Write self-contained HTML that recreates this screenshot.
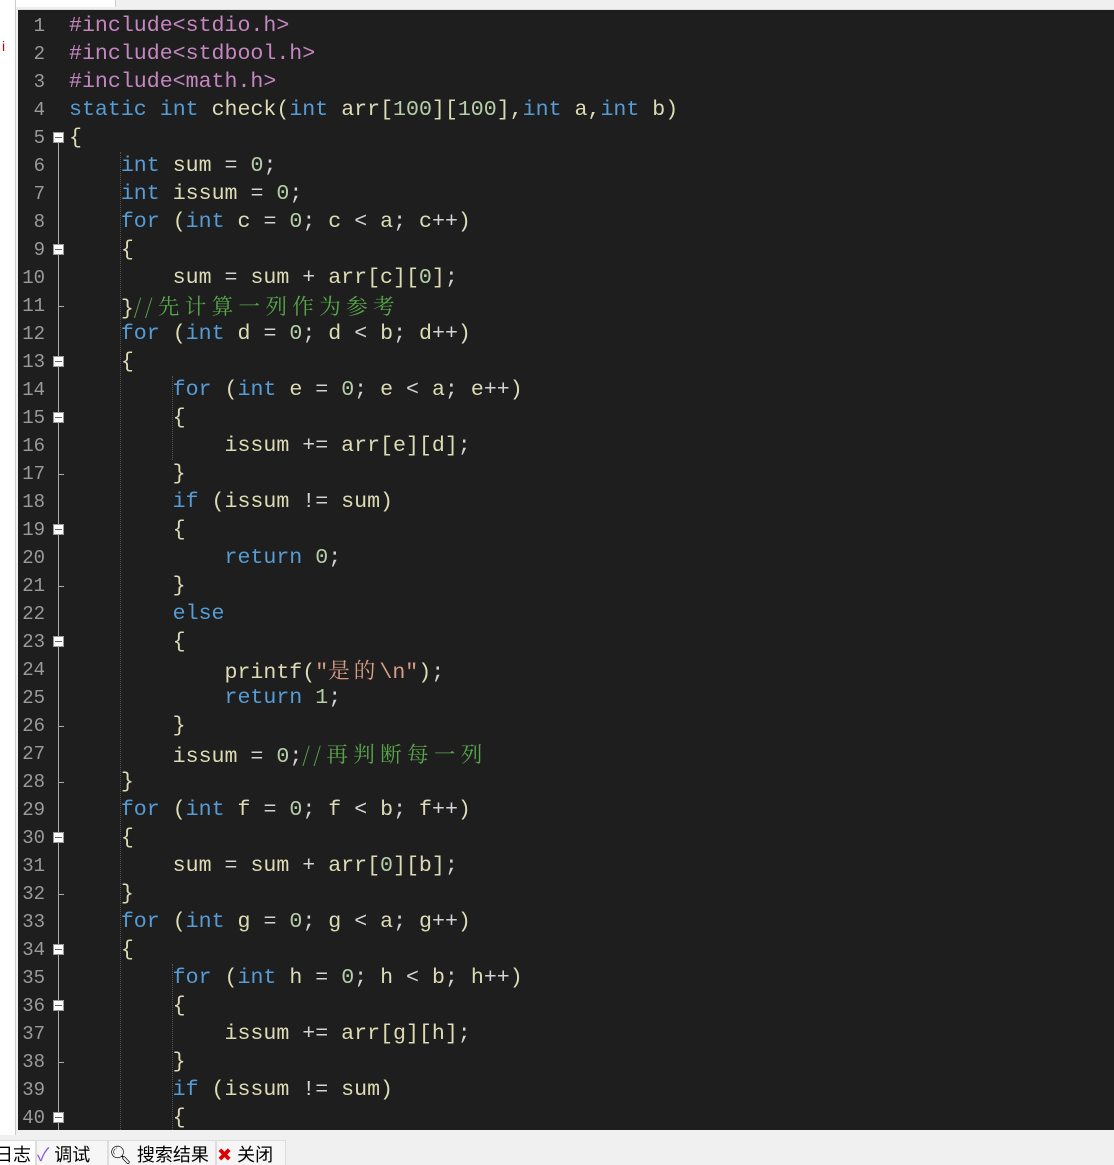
<!DOCTYPE html>
<html><head><meta charset="utf-8"><style>
body{margin:0;width:1114px;height:1161px;background:#f0f0f0;position:relative;overflow:hidden;font-family:"Liberation Mono",monospace}
#left{position:absolute;left:0;top:0;width:15px;height:1135px;background:#fff;border-right:1px solid #ccc}
#ed{position:absolute;left:18px;top:10px;width:1096px;height:1120px;background:#1e1e1e;overflow:hidden}
#lines{position:absolute;left:0;top:2px;width:100%;height:100%}
.ln{position:absolute;left:0;width:27px;text-align:right;color:#9a9a9a;font-size:19px;height:28px;line-height:28px}
.c{position:absolute;left:51px;white-space:pre;font-size:21.6px;height:28px;line-height:28px;color:#dcdcb4}
.k{color:#569cd6}.p{color:#c586c0}.n{color:#b5cea8}.o{color:#d4d4d4}.cm{color:#57a64a;font-family:"Noto Serif CJK SC",serif;letter-spacing:5.3px}.s{color:#d69d85}.cs{font-family:"Noto Serif CJK SC",serif;letter-spacing:4px}
.fl{position:absolute;left:40px;width:1px;background:#aaa}
.box{position:absolute;left:35px;width:9px;height:9px;background:#fff;border:1px solid #999}
.box:after{content:"";position:absolute;left:1px;top:4px;width:7px;height:1px;background:#666}
.tk{position:absolute;left:40px;width:6px;height:1px;background:#aaa}
.g{position:absolute;width:0;border-left:1px dotted #555}
#bt{position:absolute;left:0;top:1137px;width:1114px;height:24px;background:#f0f0f0;font-family:"Liberation Sans","Noto Sans CJK SC",sans-serif;font-size:18px}
.tab{position:absolute;top:3px;height:24px;background:#f6f6f6;border:1px solid #ddd;border-bottom:none;line-height:28px;white-space:nowrap;overflow:hidden}
</style></head><body>
<div style="position:absolute;left:15px;top:0;width:1099px;height:9px;background:#f0f0f0;border-bottom:1px solid #ddd"></div>
<div style="position:absolute;left:15px;top:0;width:100px;height:7px;background:#fff;border-right:1px solid #ccc"></div>
<div id="left"><span style="position:absolute;left:2px;top:38px;color:#c00;font-size:14px;font-family:'Liberation Sans'">i</span></div>
<div id="ed">
<div class="fl" style="top:132px;height:990px"></div>
<div class="g" style="left:102px;top:142px;height:980px"></div>
<div class="g" style="left:154px;top:366px;height:84px"></div>
<div class="g" style="left:154px;top:954px;height:168px"></div>
<div id="lines"></div>
</div>
<div id="bt">
<div class="tab" style="left:-6px;width:40px;background:#fff">日志</div>
<div class="tab" style="left:36px;width:70px"><span style="color:#8a5ad0">✓</span> 调试</div>
<div class="tab" style="left:108px;width:106px">🔍︎ 搜索结果</div>
<div class="tab" style="left:216px;width:68px"><span style="color:#d00">✖</span> 关闭</div>
</div>
<script>
const L=[
'<span class="p">#include&lt;stdio.h&gt;</span>',
'<span class="p">#include&lt;stdbool.h&gt;</span>',
'<span class="p">#include&lt;math.h&gt;</span>',
'<span class="k">static</span> <span class="k">int</span> check(<span class="k">int</span> arr[<span class="n">100</span>][<span class="n">100</span>],<span class="k">int</span> a,<span class="k">int</span> b)',
'{',
'    <span class="k">int</span> sum <span class="o">=</span> <span class="n">0</span><span class="o">;</span>',
'    <span class="k">int</span> issum <span class="o">=</span> <span class="n">0</span><span class="o">;</span>',
'    <span class="k">for</span> (<span class="k">int</span> c <span class="o">=</span> <span class="n">0</span><span class="o">;</span> c <span class="o">&lt;</span> a<span class="o">;</span> c<span class="o">++</span>)',
'    {',
'        sum <span class="o">=</span> sum <span class="o">+</span> arr[c][<span class="n">0</span>]<span class="o">;</span>',
'    }<span class="cm">//先计算一列作为参考</span>',
'    <span class="k">for</span> (<span class="k">int</span> d <span class="o">=</span> <span class="n">0</span><span class="o">;</span> d <span class="o">&lt;</span> b<span class="o">;</span> d<span class="o">++</span>)',
'    {',
'        <span class="k">for</span> (<span class="k">int</span> e <span class="o">=</span> <span class="n">0</span><span class="o">;</span> e <span class="o">&lt;</span> a<span class="o">;</span> e<span class="o">++</span>)',
'        {',
'            issum <span class="o">+=</span> arr[e][d]<span class="o">;</span>',
'        }',
'        <span class="k">if</span> (issum <span class="o">!=</span> sum)',
'        {',
'            <span class="k">return</span> <span class="n">0</span><span class="o">;</span>',
'        }',
'        <span class="k">else</span>',
'        {',
'            printf(<span class="s">"<span class="cs">是的</span>\\n"</span>)<span class="o">;</span>',
'            <span class="k">return</span> <span class="n">1</span><span class="o">;</span>',
'        }',
'        issum <span class="o">=</span> <span class="n">0</span><span class="o">;</span><span class="cm">//再判断每一列</span>',
'    }',
'    <span class="k">for</span> (<span class="k">int</span> f <span class="o">=</span> <span class="n">0</span><span class="o">;</span> f <span class="o">&lt;</span> b<span class="o">;</span> f<span class="o">++</span>)',
'    {',
'        sum <span class="o">=</span> sum <span class="o">+</span> arr[<span class="n">0</span>][b]<span class="o">;</span>',
'    }',
'    <span class="k">for</span> (<span class="k">int</span> g <span class="o">=</span> <span class="n">0</span><span class="o">;</span> g <span class="o">&lt;</span> a<span class="o">;</span> g<span class="o">++</span>)',
'    {',
'        <span class="k">for</span> (<span class="k">int</span> h <span class="o">=</span> <span class="n">0</span><span class="o">;</span> h <span class="o">&lt;</span> b<span class="o">;</span> h<span class="o">++</span>)',
'        {',
'            issum <span class="o">+=</span> arr[g][h]<span class="o">;</span>',
'        }',
'        <span class="k">if</span> (issum <span class="o">!=</span> sum)',
'        {'];
const folds=[5,9,13,15,19,23,30,34,36,40],ends=[11,17,21,26,28,32,38];
let h='';
L.forEach((t,i)=>{const n=i+1,y=i*28;
h+=`<div class="ln" style="top:${y}px">${n}</div><div class="c" style="top:${y}px">${t}</div>`;
if(folds.includes(n))h+=`<div class="box" style="top:${y+8}px"></div>`;
if(ends.includes(n))h+=`<div class="tk" style="top:${y+14}px"></div>`;});
document.getElementById('lines').innerHTML=h;
</script>
</body></html>
